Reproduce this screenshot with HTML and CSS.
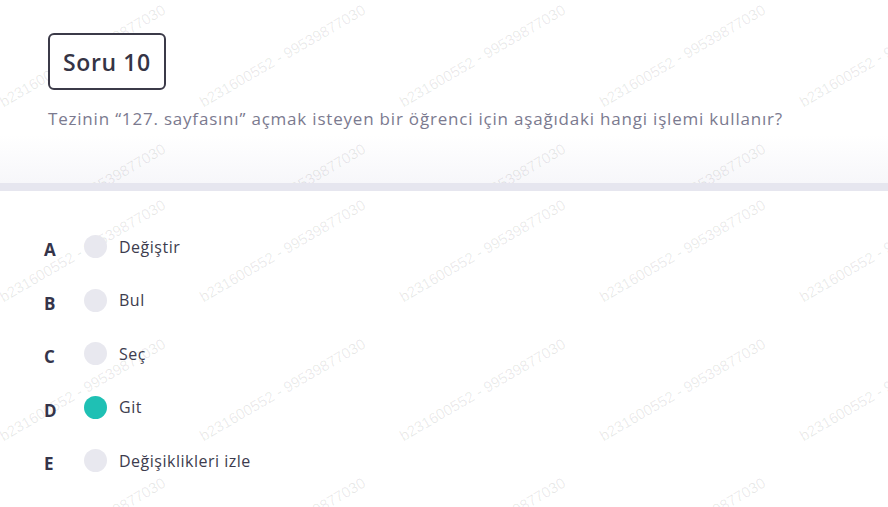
FILE: index.html
```html
<!DOCTYPE html>
<html lang="tr">
<head>
<meta charset="utf-8">
<title>Soru 10</title>
<link rel="stylesheet" href="styles.css">
</head>
<body>
<div class="page">
  <header class="head">
    <div class="wm wm-head" aria-hidden="true">
      <span>b231600552 - 99539877030</span><span>b231600552 - 99539877030</span><span>b231600552 - 99539877030</span><span>b231600552 - 99539877030</span><span>b231600552 - 99539877030</span>
      <span>b231600552 - 99539877030</span><span>b231600552 - 99539877030</span><span>b231600552 - 99539877030</span><span>b231600552 - 99539877030</span><span>b231600552 - 99539877030</span>
    </div>
    <div class="head-content">
      <div class="badge">Soru 10</div>
      <p class="question">Tezinin “127. sayfasını” açmak isteyen bir öğrenci için aşağıdaki hangi işlemi kullanır?</p>
    </div>
  </header>
  <div class="bar"></div>
  <section class="options">
    <div class="wm wm-opts" aria-hidden="true">
      <span>b231600552 - 99539877030</span><span>b231600552 - 99539877030</span><span>b231600552 - 99539877030</span><span>b231600552 - 99539877030</span><span>b231600552 - 99539877030</span>
      <span>b231600552 - 99539877030</span><span>b231600552 - 99539877030</span><span>b231600552 - 99539877030</span><span>b231600552 - 99539877030</span><span>b231600552 - 99539877030</span>
      <span>b231600552 - 99539877030</span><span>b231600552 - 99539877030</span><span>b231600552 - 99539877030</span><span>b231600552 - 99539877030</span><span>b231600552 - 99539877030</span>
    </div>
    <ul class="opt-list">
      <li class="opt"><span class="letter">A</span><span class="dot"></span><span class="label">Değiştir</span></li>
      <li class="opt"><span class="letter">B</span><span class="dot"></span><span class="label">Bul</span></li>
      <li class="opt"><span class="letter">C</span><span class="dot"></span><span class="label">Seç</span></li>
      <li class="opt"><span class="letter">D</span><span class="dot dot-on"></span><span class="label">Git</span></li>
      <li class="opt"><span class="letter">E</span><span class="dot"></span><span class="label">Değişiklikleri izle</span></li>
    </ul>
  </section>
</div>
</body>
</html>
```

FILE: styles.css
```css
* { box-sizing: border-box; }
html, body { margin: 0; padding: 0; background: #fff; }
body {
  font-family: "Open Sans", "Noto Sans", sans-serif;
  color: #3a394b;
  width: 888px;
  height: 507px;
  overflow: hidden;
}
.page { display: flex; flex-direction: column; height: 507px; }

.head {
  position: relative;
  height: 183px;
  overflow: hidden;
  background: linear-gradient(to bottom, #ffffff 0, #ffffff 135px, #f7f7fa 183px);
}
.head-content {
  position: relative;
  z-index: 1;
  padding: 33px 48px 0;
}
.badge {
  display: inline-flex;
  align-items: center;
  height: 57px;
  padding: 0 13px;
  border: 2px solid #3b3a48;
  border-radius: 6px;
  background: #fff;
  font-size: 23px;
  font-weight: 600;
  letter-spacing: 0.6px;
  color: #353445;
}
.question {
  margin: 17px 0 0;
  font-size: 17px;
  line-height: 24px;
  letter-spacing: 0.8px;
  color: #7b7a8f;
}
.bar { height: 8px; background: #e6e6ef; flex: none; }

.options {
  position: relative;
  flex: 1;
  overflow: hidden;
}
.opt-list {
  position: relative;
  z-index: 1;
  list-style: none;
  margin: 0;
  padding: 29px 0 0 44px;
}
.opt {
  display: flex;
  align-items: center;
  height: 53.5px;
}
.letter {
  width: 40px;
  margin-top: 6px;
  font-size: 17px;
  font-weight: 700;
  color: #34344a;
}
.dot {
  width: 23px;
  height: 23px;
  border-radius: 50%;
  background: #e8e8ef;
  flex: none;
}
.dot-on { background: #1fc0b4; }
.label {
  margin-left: 12px;
  font-size: 16px;
  letter-spacing: 0.5px;
  color: #3d3c4e;
}

.wm {
  position: absolute;
  left: 5px;
  display: grid;
  grid-template-columns: repeat(5, 200px);
  grid-auto-rows: 139px;
  pointer-events: none;
  z-index: 0;
}
.wm-head { top: 94px; }
.wm-opts { top: 98px; }
.wm span {
  display: block;
  width: 200px;
  height: 16px;
  line-height: 16px;
  white-space: nowrap;
  font-family: "Liberation Sans", Arial, sans-serif;
  font-size: 15px;
  color: rgba(0, 0, 0, 0.09);
  transform: rotate(-30deg);
  transform-origin: 0 100%;
}
```
